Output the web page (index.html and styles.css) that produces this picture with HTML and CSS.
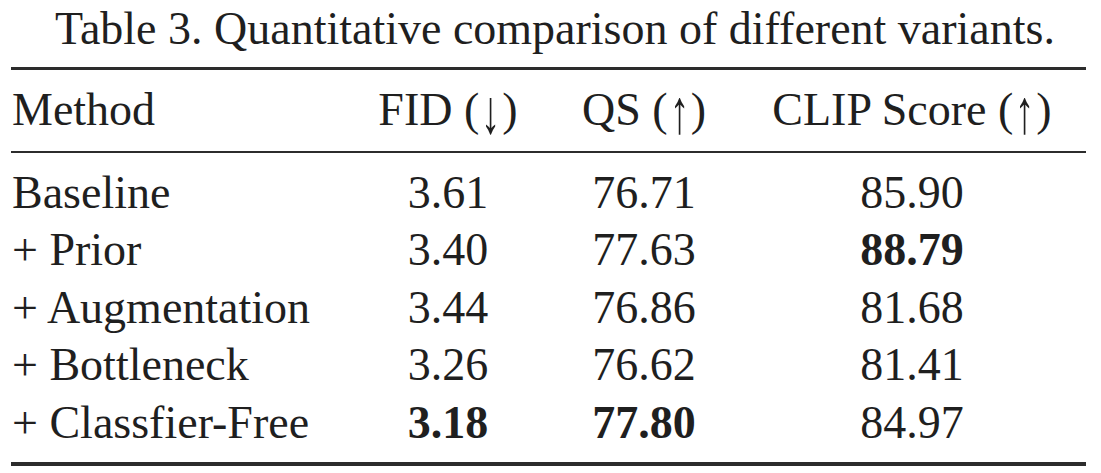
FILE: index.html
```html
<!DOCTYPE html>
<html lang="en">
<head>
<meta charset="utf-8">
<title>Table 3</title>
<link rel="stylesheet" href="styles.css">
</head>
<body>
<div class="page">
  <div class="caption">Table 3. Quantitative comparison of different variants.</div>
  <div class="table">
    <div class="row head">
      <div class="c method">Method</div>
      <div class="c">FID (<span class="arr">↓</span>)</div>
      <div class="c">QS (<span class="arr">↑</span>)</div>
      <div class="c">CLIP Score (<span class="arr">↑</span>)</div>
    </div>
    <div class="body">
      <div class="row">
        <div class="c method">Baseline</div>
        <div class="c">3.61</div>
        <div class="c">76.71</div>
        <div class="c">85.90</div>
      </div>
      <div class="row">
        <div class="c method">+ Prior</div>
        <div class="c">3.40</div>
        <div class="c">77.63</div>
        <div class="c"><b>88.79</b></div>
      </div>
      <div class="row">
        <div class="c method">+ Augmentation</div>
        <div class="c">3.44</div>
        <div class="c">76.86</div>
        <div class="c">81.68</div>
      </div>
      <div class="row">
        <div class="c method">+ Bottleneck</div>
        <div class="c">3.26</div>
        <div class="c">76.62</div>
        <div class="c">81.41</div>
      </div>
      <div class="row">
        <div class="c method">+ Classfier-Free</div>
        <div class="c"><b>3.18</b></div>
        <div class="c"><b>77.80</b></div>
        <div class="c">84.97</div>
      </div>
    </div>
  </div>
</div>
</body>
</html>
```

FILE: styles.css
```css
html, body {
  margin: 0;
  padding: 0;
  background: #ffffff;
}

body {
  font-family: "Liberation Serif", "Times New Roman", serif;
  font-size: 46px;
  color: #1f1f1f;
}

.page {
  width: 1075px;
  padding: 0 15px 0 11px;
}

.caption {
  line-height: 57px;
  text-align: center;
  padding-left: 13px;
  margin: 0 0 10px;
  white-space: nowrap;
}

.table {
  border-top: 3px solid #2c2c2c;
  border-bottom: 4px solid #2c2c2c;
}

.row {
  display: grid;
  grid-template-columns: 357px 160px 232px 304px;
  padding-right: 22px;
  line-height: 57.5px;
}

.head {
  padding-top: 11px;
  padding-bottom: 12px;
  border-bottom: 2px solid #2c2c2c;
}

.body {
  padding: 11px 0 11px;
}

.c {
  text-align: center;
  white-space: nowrap;
}

.c.method {
  text-align: left;
  padding-left: 1px;
}

.arr {
  display: inline-block;
  transform: translateY(3px) scale(0.85, 1.35);
}

b {
  font-weight: 700;
}
```
